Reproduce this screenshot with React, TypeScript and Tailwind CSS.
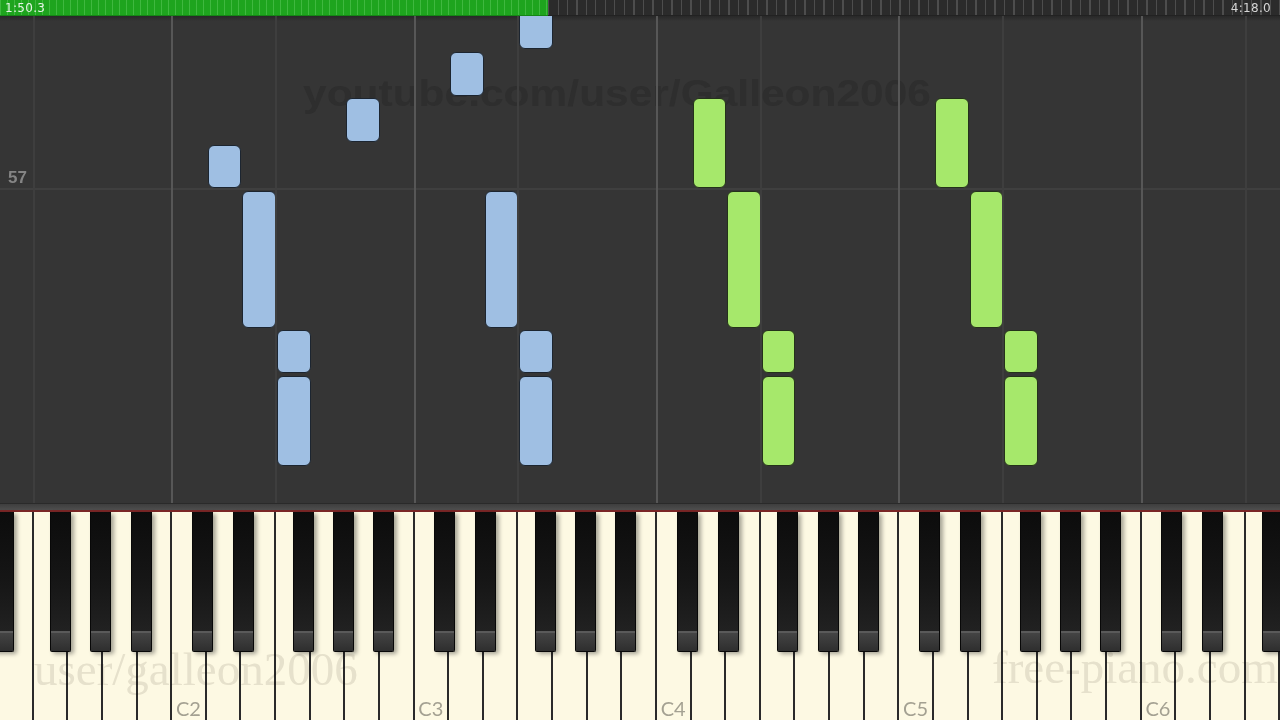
import React from 'react';

const NAMES = ['E', 'F', 'G', 'A', 'B', 'C', 'D'];
const KEYS = Array.from({ length: 37 }, (_, i) => ({
  i,
  name: NAMES[i % 7],
  octave: Math.floor((i + 2) / 7) + 1,
}));

const BLACK_POS: Record<string, string> = {
  C: 'left-[calc(100%-13px)]',
  D: 'left-[calc(100%-6.5px)]',
  F: 'left-[calc(100%-16px)]',
  G: 'left-[calc(100%-10.5px)]',
  A: 'left-[calc(100%-5px)]',
};

type Note = { i: number; top: number; h: number; c: 'b' | 'g' };
const NOTES: Note[] = [
  { i: 6, top: 129, h: 43, c: 'b' },
  { i: 7, top: 175, h: 137, c: 'b' },
  { i: 8, top: 314, h: 43, c: 'b' },
  { i: 8, top: 360, h: 90, c: 'b' },
  { i: 10, top: 82, h: 44, c: 'b' },
  { i: 13, top: 36, h: 44, c: 'b' },
  { i: 15, top: -14, h: 47, c: 'b' },
  { i: 14, top: 175, h: 137, c: 'b' },
  { i: 15, top: 314, h: 43, c: 'b' },
  { i: 15, top: 360, h: 90, c: 'b' },
  { i: 20, top: 82, h: 90, c: 'g' },
  { i: 21, top: 175, h: 137, c: 'g' },
  { i: 22, top: 314, h: 43, c: 'g' },
  { i: 22, top: 360, h: 90, c: 'g' },
  { i: 27, top: 82, h: 90, c: 'g' },
  { i: 28, top: 175, h: 137, c: 'g' },
  { i: 29, top: 314, h: 43, c: 'g' },
  { i: 29, top: 360, h: 90, c: 'g' },
];

function BlackKey({ pos }: { pos: string }) {
  return (
    <div
      className={`absolute top-0 z-10 h-[140px] w-[21px] ${pos} rounded-b-[2px] border-x border-b border-[#080808] bg-linear-to-b from-[#0c0c0c] via-[#161616] to-[#262626] shadow-[3px_2px_4px_rgba(0,0,0,0.35)]`}
    >
      <div className="absolute bottom-0 left-0 right-0 h-[20px] border-t-[2px] border-[#5a5a5a] bg-linear-to-b from-[#444444] to-[#2e2e2e]" />
    </div>
  );
}

export default function App() {
  return (
    <div className="relative flex h-[720px] w-[1280px] flex-col overflow-hidden bg-[#353535]">
      {/* Progress bar */}
      <div className="relative flex h-[16px] flex-none">
        <div className="h-full w-[548px] bg-[repeating-linear-gradient(90deg,#3fb83f_0px,#3fb83f_1px,#1ea41e_1px,#1ea41e_7px)] border-b border-[#168616]" />
        <div className="h-full flex-1 bg-[repeating-linear-gradient(90deg,#4d4d4d_0px,#4d4d4d_1px,#2b2b2b_1px,#2b2b2b_9.5px)] border-b border-[#222222]" />
        <div className="absolute inset-0 flex items-center justify-between pl-[5px] pr-[9px] font-['DejaVu_Sans',sans-serif] text-[12px] leading-none tracking-[0.3px]">
          <span className="text-[#e6f4e6]">1:50.3</span>
          <span className="text-[#d6d6d6]">4:18.0</span>
        </div>
      </div>

      {/* Piano roll */}
      <div className="relative h-[487px] flex-none overflow-hidden bg-[#353535]">
        <div className="absolute left-0 right-0 top-0 h-[5px] bg-linear-to-b from-[#282828] to-transparent" />
        <div className="absolute left-0 right-0 top-[172px] h-[2px] bg-[#3f3f3f]" />
        <div className="absolute left-[8px] top-[153px] font-['Liberation_Sans',sans-serif] text-[17px] font-bold leading-none text-[#858585]">
          57
        </div>
        <div className="absolute left-[303px] top-[60px] origin-left scale-x-[1.18] whitespace-nowrap font-['Liberation_Sans',sans-serif] text-[36px] font-bold leading-none text-[#2e2e2e]">
          youtube.com/user/Galleon2006
        </div>
        <div className="relative -ml-px flex h-full w-[1281px]">
          {KEYS.map((k) => (
            <div key={k.i} className="relative h-full flex-1">
              {k.name === 'C' && <div className="absolute bottom-0 left-[-1px] top-0 w-[2px] bg-[#575757]" />}
              {k.name === 'F' && <div className="absolute bottom-0 left-[-1px] top-0 w-[2px] bg-[#3e3e3e]" />}
              {NOTES.filter((n) => n.i === k.i).map((n, j) => (
                <div
                  key={j}
                  className={`absolute left-[1px] right-0 rounded-[6px] border-[1.5px] ${
                    n.c === 'b' ? 'border-[#1c2530] bg-[#9fbfe3]' : 'border-[#24321a] bg-[#a6e86b]'
                  }`}
                  style={{ top: n.top, height: n.h }}
                />
              ))}
            </div>
          ))}
        </div>
      </div>

      {/* Keyboard top band */}
      <div className="h-[7px] flex-none border-t border-[#2a2a2a] bg-linear-to-b from-[#3e3e3e] to-[#4e4e4e]" />
      <div className="h-[2px] flex-none bg-[#7a2626]" />

      {/* Keys */}
      <div className="relative h-[208px] flex-none">
        <div className="relative -ml-px flex h-full w-[1281px]">
          {KEYS.map((k) => (
            <div
              key={k.i}
              className="relative flex h-full flex-1 items-end justify-center border-r-[2px] border-[#2a2a2a] bg-[#fdf9e3]"
            >
              {k.name === 'C' && (
                <span className="font-['Lato',sans-serif] text-[20px] leading-[24px] text-[#a4a192]">
                  C{k.octave}
                </span>
              )}
              {k.i === 0 && <BlackKey pos="left-[-6.5px]" />}
              {BLACK_POS[k.name] && <BlackKey pos={BLACK_POS[k.name]} />}
            </div>
          ))}
        </div>
        <div className="pointer-events-none absolute left-[34px] top-[134px] z-[5] whitespace-nowrap font-['Liberation_Serif',serif] text-[47px] leading-none text-[#e8e7e5] mix-blend-multiply">
          user/galleon2006
        </div>
        <div className="pointer-events-none absolute left-[992px] top-[132px] z-[5] whitespace-nowrap font-['Liberation_Serif',serif] text-[47px] leading-none text-[#e8e7e5] mix-blend-multiply">
          free-piano.com
        </div>
      </div>
    </div>
  );
}
